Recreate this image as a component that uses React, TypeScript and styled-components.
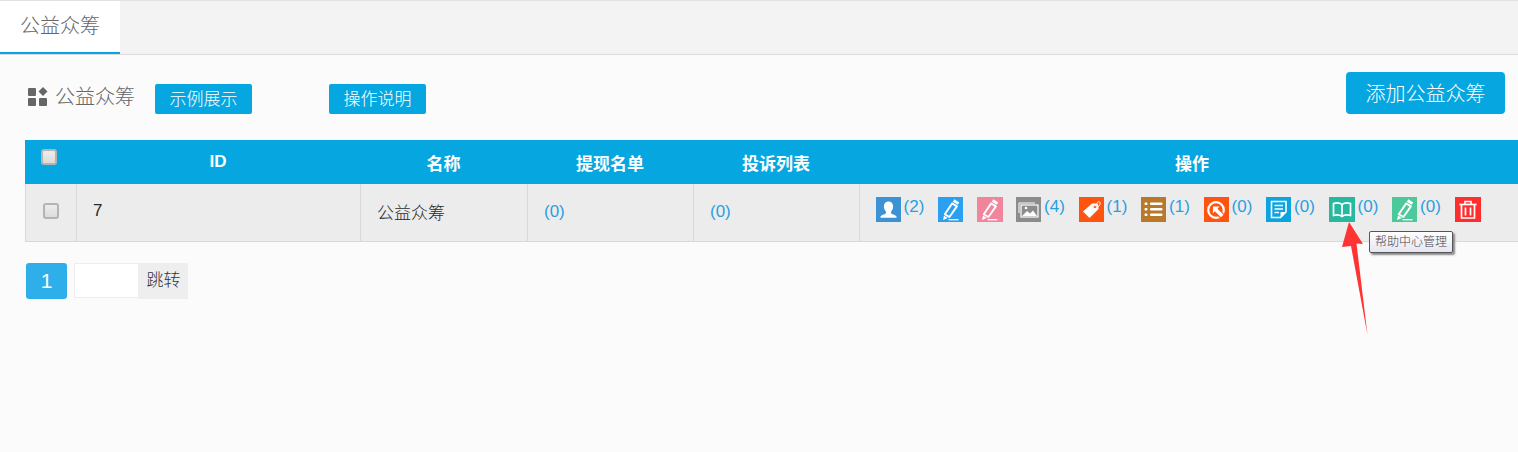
import React from "react";
import styled, { createGlobalStyle } from "styled-components";

const FONT = `"Liberation Sans", "Noto Sans CJK SC", sans-serif`;
const BLUE = "#06a7e1";

const Global = createGlobalStyle`
  html, body { margin: 0; padding: 0; background: #fbfbfb; overflow: hidden; }
  body { font-family: ${FONT}; width: 1518px; height: 452px; }
`;

const Page = styled.div`
  position: relative;
  width: 1518px;
  height: 452px;
  overflow: hidden;
  background: #fbfbfb;
`;

const TabBar = styled.div`
  display: flex;
  height: 53px;
  background: #f3f3f3;
  border-top: 1px solid #e2e2e2;
  border-bottom: 1px solid #dcdcdc;
`;

const Tab = styled.div`
  box-sizing: border-box;
  width: 120px;
  height: 53px;
  background: #fff;
  border-bottom: 2px solid ${BLUE};
  text-align: center;
  font-size: 20px;
  line-height: 50px;
  color: #666;
  font-weight: 300;
`;

const Content = styled.div`
  padding: 17px 0 0 25px;
`;

const Header = styled.div`
  display: flex;
  align-items: flex-end;
  justify-content: space-between;
  height: 42px;
  margin-bottom: 26px;
  padding-right: 13px;
`;

const TitleGroup = styled.div`
  display: flex;
  align-items: center;
  height: 30px;
`;

const Title = styled.h1`
  display: flex;
  align-items: center;
  margin: 0 0 4px 3px;
  font-size: 20px;
  font-weight: 300;
  line-height: 30px;
  color: #666;
`;

const TitleIcon = styled.svg`
  width: 20px;
  height: 20px;
  margin-right: 7px;
`;

const SmallButton = styled.button<{ $gap: number }>`
  box-sizing: border-box;
  width: 97px;
  height: 30px;
  margin-left: ${(p) => p.$gap}px;
  padding: 0 0 4px;
  border: 0;
  border-radius: 2px;
  background: ${BLUE};
  color: #fff;
  font-family: ${FONT};
  font-size: 17px;
  font-weight: 300;
`;

const AddButton = styled.button`
  width: 159px;
  height: 42px;
  padding: 0 0 2px;
  border: 0;
  border-radius: 4px;
  background: ${BLUE};
  color: #fff;
  font-family: ${FONT};
  font-size: 20px;
  font-weight: 300;
`;

const Table = styled.table`
  width: 1500px;
  table-layout: fixed;
  border-collapse: separate;
  border-spacing: 0;
`;

const Th = styled.th<{ $w?: number }>`
  ${(p) => (p.$w ? `width: ${p.$w}px;` : "")}
  box-sizing: border-box;
  height: 44px;
  padding: 0;
  background: ${BLUE};
  color: #fff;
  font-size: 17px;
  font-weight: 700;
  text-align: center;
`;

const CheckTh = styled(Th)`
  padding: 0 0 10px 0;
  text-align: left;
`;

const Td = styled.td`
  box-sizing: border-box;
  height: 58px;
  padding: 0 0 3px 16px;
  background: #ececec;
  border-left: 1px solid #d8d8d8;
  border-bottom: 1px solid #d8d8d8;
  font-size: 17px;
  font-weight: 300;
  color: #2a2a2a;
  white-space: nowrap;
`;

const CheckTd = styled(Td)`
  padding: 0 0 3px 17px;
`;

const Check = styled.span<{ $left?: number }>`
  display: block;
  box-sizing: border-box;
  width: 16px;
  height: 16px;
  margin-left: ${(p) => p.$left ?? 0}px;
  border: 2px solid #b4b4b4;
  border-radius: 3px;
  background: linear-gradient(#ececec, #dcdcdc);
`;

const Count = styled.span`
  position: relative;
  top: 1px;
  color: #2a9fe0;
  font-size: 17px;
  font-family: ${FONT};
`;

const OpsTd = styled(Td)`
  padding: 0 0 6px 15.6px;
`;

const Ops = styled.div`
  display: flex;
  align-items: flex-start;
  gap: 13.5px;
`;

const Op = styled.div`
  display: flex;
  align-items: flex-start;
`;

const OpCount = styled.span`
  box-sizing: border-box;
  width: 24px;
  padding-left: 3px;
  color: #2a9fe0;
  font-size: 17px;
  line-height: 20px;
  font-family: ${FONT};
`;

const Tile = styled.svg<{ $c: string; $w: number }>`
  display: block;
  width: ${(p) => p.$w}px;
  height: 25px;
  background: ${(p) => p.$c};
  flex: none;
`;

const Pager = styled.div`
  display: flex;
  align-items: flex-start;
  margin: 21px 0 0 1px;
`;

const PageNum = styled.div`
  width: 41px;
  height: 36px;
  border-radius: 3px;
  background: #2fafe9;
  color: #fff;
  font-size: 21px;
  line-height: 36px;
  text-align: center;
`;

const PageInput = styled.input`
  box-sizing: border-box;
  width: 65px;
  height: 35px;
  margin: 0 0 0 7px;
  padding: 0;
  border: 1px solid #eeeeee;
  background: #fff;
  outline: none;
`;

const Jump = styled.div`
  width: 49px;
  height: 36px;
  background: #eeeeee;
  color: #333;
  font-size: 17px;
  font-weight: 300;
  line-height: 36px;
  text-align: center;
`;

const Tooltip = styled.div`
  position: absolute;
  left: 1369px;
  top: 231px;
  box-sizing: border-box;
  width: 84px;
  height: 22px;
  border: 1px solid #555;
  border-radius: 2px;
  background: linear-gradient(#fff, #e6e6f4);
  box-shadow: 2px 2px 2px #888;
  color: #444;
  font-size: 12px;
  font-weight: 300;
  line-height: 20px;
  text-align: center;
  white-space: nowrap;
`;

const Arrow = styled.svg`
  position: absolute;
  left: 1340px;
  top: 220px;
  width: 30px;
  height: 120px;
`;

const W = { stroke: "#fff", fill: "none" } as const;

const Pen = () => (
  <g>
    <path d="M16.3 2.3 L21.2 5.4 L19.8 7.8 L14.9 4.7 Z" fill="#fff" />
    <path d="M14.2 6.4 L18.9 9.4 L11.4 20 L6.8 17.2 Z" fill="none" stroke="#fff" strokeWidth="1.9" strokeLinejoin="round" />
    <path d="M6 18.5 L9.8 21 L5 23 Z" fill="#fff" />
    <path d="M10.5 22.7 H20.5" stroke="#fff" strokeWidth="1.3" />
  </g>
);

const Person = () => (
  <path d="M12.5 4.5c3 0 4.6 2.3 4.6 5 0 2.2-1 4-2 5v1.7c0 .8 4.8 1.7 5.4 3.3v1.2H4.5v-1.2c.6-1.6 5.4-2.5 5.4-3.3v-1.7c-1-1-2-2.8-2-5 0-2.7 1.6-5 4.6-5z" fill="#fff" />
);

const Pictures = () => (
  <g>
    <path d="M3 16V6h16" {...W} strokeWidth="1" />
    <rect x="5" y="8" width="17" height="12" fill="#8c8c8c" stroke="#fff" strokeWidth="1.2" />
    <path d="M6 19l5-5 3 2.5 3-3 4 5.5z" fill="#fff" />
    <circle cx="10" cy="11" r="1.3" fill="#fff" />
  </g>
);

const Tag = () => (
  <g>
    <path d="M4 14.5 L13 6.5 L19 6.5 L19.5 12 L10.5 21 Z" fill="#fff" />
    <circle cx="16" cy="9.8" r="1.4" fill="#ff5310" />
    <path d="M16 9.5c1-3 3-5.5 4.5-4.5s.5 3.5-2.5 6" {...W} strokeWidth="1" />
  </g>
);

const List = () => (
  <g fill="#fff">
    <rect x="3.5" y="5.5" width="3" height="2.6" rx="1" />
    <rect x="3.5" y="11" width="3" height="2.6" rx="1" />
    <rect x="3.5" y="16.5" width="3" height="2.6" rx="1" />
    <rect x="9" y="5.5" width="12.5" height="2.6" rx="1" />
    <rect x="9" y="11" width="12.5" height="2.6" rx="1" />
    <rect x="9" y="16.5" width="12.5" height="2.6" rx="1" />
  </g>
);

const Target = () => (
  <g>
    <circle cx="12" cy="13" r="7.8" {...W} strokeWidth="2.2" />
    <path d="M15 16l5 5" stroke="#ff5310" strokeWidth="6" />
    <path d="M9 9.5h6.5l-2 2.2 6 6-2.6 2.6-6-6-2 2z" fill="#fff" />
  </g>
);

const Note = () => (
  <g>
    <path d="M5.5 4.5H20V15l-5.5 5.5h-9z" {...W} strokeWidth="1.6" />
    <path d="M8.5 8.5H17M8.5 12H17M8.5 15.5H13" stroke="#fff" strokeWidth="1.4" />
    <path d="M14.5 20.5V15H20z" fill="#fff" />
  </g>
);

const Book = () => (
  <g {...W} strokeWidth="1.7">
    <path d="M13 7.5C11 6 7 5.8 4.5 6.5v12c2.5-.7 6.5-.5 8.5 1 2-1.5 6-1.7 8.5-1v-12C19 5.8 15 6 13 7.5z" />
    <path d="M13 7.5v12" />
  </g>
);

const Trash = () => (
  <g {...W} strokeWidth="1.7">
    <path d="M4.5 7.5h17" />
    <path d="M10 7V4.5h6V7" />
    <path d="M6.5 8v13h13V8" />
    <path d="M10.5 10.5v8M15.5 10.5v8" />
  </g>
);

const ops: { c: string; w: number; n?: number; icon: React.ReactNode }[] = [
  { c: "#3b93d6", w: 25, n: 2, icon: <Person /> },
  { c: "#2ba0f0", w: 25, icon: <Pen /> },
  { c: "#f0859c", w: 26, icon: <Pen /> },
  { c: "#8c8c8c", w: 25, n: 4, icon: <Pictures /> },
  { c: "#ff5310", w: 25, n: 1, icon: <Tag /> },
  { c: "#b8792a", w: 25, n: 1, icon: <List /> },
  { c: "#ff5310", w: 25, n: 0, icon: <Target /> },
  { c: "#0ba4e0", w: 25, n: 0, icon: <Note /> },
  { c: "#28b8a0", w: 26, n: 0, icon: <Book /> },
  { c: "#4cc99a", w: 25, n: 0, icon: <Pen /> },
  { c: "#ff2d2d", w: 26, icon: <Trash /> },
];

export default function App() {
  return (
    <Page>
      <Global />
      <TabBar>
        <Tab>公益众筹</Tab>
      </TabBar>
      <Content>
        <Header>
          <TitleGroup>
            <Title>
              <TitleIcon viewBox="0 0 20 20">
                <g fill="#666">
                  <rect x="0" y="1" width="8" height="8" rx="1" />
                  <path d="M15 0l4.5 4.5L15 9l-4.5-4.5z" />
                  <rect x="0" y="11" width="8" height="8" rx="1" />
                  <rect x="11" y="11" width="8" height="8" rx="1" />
                </g>
              </TitleIcon>
              公益众筹
            </Title>
            <SmallButton $gap={20}>示例展示</SmallButton>
            <SmallButton $gap={77}>操作说明</SmallButton>
          </TitleGroup>
          <AddButton>添加公益众筹</AddButton>
        </Header>
        <Table>
          <thead>
            <tr>
              <CheckTh $w={51}>
                <Check $left={16} />
              </CheckTh>
              <Th $w={284}>ID</Th>
              <Th $w={167}>名称</Th>
              <Th $w={166}>提现名单</Th>
              <Th $w={166}>投诉列表</Th>
              <Th>操作</Th>
            </tr>
          </thead>
          <tbody>
            <tr>
              <CheckTd>
                <Check />
              </CheckTd>
              <Td>7</Td>
              <Td>公益众筹</Td>
              <Td>
                <Count>(0)</Count>
              </Td>
              <Td>
                <Count>(0)</Count>
              </Td>
              <OpsTd>
                <Ops>
                  {ops.map((o, i) => (
                    <Op key={i}>
                      <Tile $c={o.c} $w={o.w} viewBox={`0 0 ${o.w} 25`}>
                        {o.icon}
                      </Tile>
                      {o.n !== undefined && <OpCount>({o.n})</OpCount>}
                    </Op>
                  ))}
                </Ops>
              </OpsTd>
            </tr>
          </tbody>
        </Table>
        <Pager>
          <PageNum>1</PageNum>
          <PageInput />
          <Jump>跳转</Jump>
        </Pager>
      </Content>
      <Tooltip>帮助中心管理</Tooltip>
      <Arrow viewBox="0 0 30 120">
        <path d="M9 2 L23 24 L16.5 23.5 L27.5 115 L11 26 L2 27 Z" fill="#ff3333" />
      </Arrow>
    </Page>
  );
}
